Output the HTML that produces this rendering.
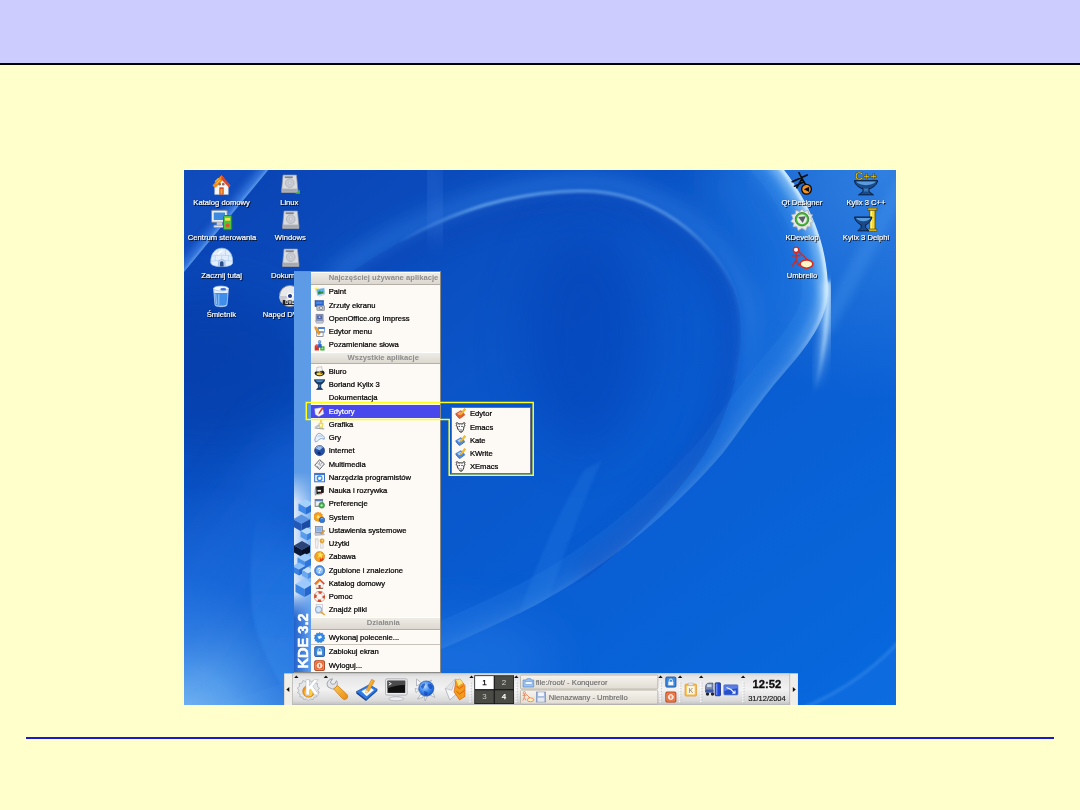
<!DOCTYPE html><html lang="pl"><head><meta charset="utf-8"><title>KDE 3.2 - menu Edytory</title><style>
*{margin:0;padding:0;box-sizing:border-box}
html,body{width:1080px;height:810px;overflow:hidden}
body{background:#ffffcc;font-family:"Liberation Sans",sans-serif;position:relative}
.hdr{position:absolute;left:0;top:0;width:1080px;height:63px;background:#ccccff}
.hline{position:absolute;left:0;top:63px;width:1080px;height:2px;background:#000}
.fline{position:absolute;left:26px;top:737px;width:1028px;height:2px;background:#1a1acc}
.desk{will-change:transform;position:absolute;left:184px;top:170px;width:712px;height:535px;overflow:hidden;background:#0a58cc;font-size:7.65px;line-height:9px;color:#000}
.desk svg{position:absolute;display:block}
.wall{left:0;top:0}
.dl{position:absolute;width:90px;text-align:center;color:#fff;white-space:nowrap;text-shadow:0.9px 0.9px 0.5px #000,0 0 1.2px #0008;-webkit-text-stroke:0.2px #fff}
.menu{position:absolute;left:110px;top:101px;width:147px;height:401.7px;background:#fdf9f5;border:0.7px solid #8a8a86;border-left:none}
.side{position:absolute;left:0;top:0;width:17.3px;height:100%;background:#5d9be6;overflow:hidden}
.mh{position:absolute;left:17.3px;right:0;height:12.8px;background:linear-gradient(#efece6,#dcd8d0);border-bottom:0.7px solid #b4b0a8;border-top:0.7px solid #fff;color:#8c8c8c;font-weight:bold;text-align:center;line-height:10.6px;padding-left:17.4px;padding-right:2.2px;white-space:nowrap}
.mi,.si{-webkit-text-stroke:0.22px #000}.mi.sel{-webkit-text-stroke:0.22px #fff}
.mi{position:absolute;left:17.3px;right:0;height:13.3px;line-height:13.3px;white-space:nowrap;padding-left:17.4px}
.mi svg{left:3px;top:1.1px;width:11.2px;height:11.2px}
.mi.sel{background:#4848ec;color:#fff}
.sep{position:absolute;left:17.3px;right:0;height:0.7px;background:#c8c4bc}
.sub{position:absolute;left:267px;top:236.5px;width:79.6px;height:67.6px;background:#fdf9f5;border:0.7px solid #6e7088}
.si{position:absolute;left:0;right:0;height:13.3px;line-height:13.3px;padding-left:17.9px;white-space:nowrap}
.si svg{left:2.8px;top:1.1px;width:11.2px;height:11.2px}
</style></head><body>
<div class="hdr"></div><div class="hline"></div><div class="fline"></div>
<div class="desk">
<svg class="wall" width="712" height="535" viewBox="0 0 712 535">
<defs>
<linearGradient id="wg" x1="0" y1="0" x2="1" y2="1"><stop offset="0" stop-color="#0a42b2"/><stop offset="0.4" stop-color="#0a55c8"/><stop offset="0.7" stop-color="#085ed4"/><stop offset="1" stop-color="#0668de"/></linearGradient>
<radialGradient id="bl" cx="-20" cy="570" r="260" gradientUnits="userSpaceOnUse"><stop offset="0" stop-color="#9cd0fa" stop-opacity=".95"/><stop offset=".3" stop-color="#6ab0f4" stop-opacity=".8"/><stop offset=".65" stop-color="#2a7ce6" stop-opacity=".4"/><stop offset="1" stop-color="#2a7ce6" stop-opacity="0"/></radialGradient>
<linearGradient id="bv" x1="0" y1="0" x2="0" y2="1"><stop offset="0" stop-color="#2a7ee8" stop-opacity="0"/><stop offset=".3" stop-color="#2a7ee8" stop-opacity=".5"/><stop offset="1" stop-color="#3a8cec" stop-opacity=".6"/></linearGradient>
<radialGradient id="tr" cx="700" cy="0" r="230" gradientUnits="userSpaceOnUse"><stop offset="0" stop-color="#4a98ee" stop-opacity=".6"/><stop offset="1" stop-color="#4a98ee" stop-opacity="0"/></radialGradient>
<filter id="b2" x="-20%" y="-20%" width="140%" height="140%"><feGaussianBlur stdDeviation="1.6"/></filter>
<filter id="b4" x="-20%" y="-20%" width="140%" height="140%"><feGaussianBlur stdDeviation="4"/></filter>
<filter id="b7" x="-20%" y="-20%" width="140%" height="140%"><feGaussianBlur stdDeviation="7"/></filter>
<filter id="b10" x="-30%" y="-30%" width="160%" height="160%"><feGaussianBlur stdDeviation="10"/></filter>
<filter id="b25" x="-50%" y="-50%" width="200%" height="200%"><feGaussianBlur stdDeviation="25"/></filter>
<linearGradient id="mg" x1="0" y1="0" x2="0" y2="1"><stop offset=".26" stop-color="#fff"/><stop offset=".52" stop-color="#000"/></linearGradient>
<mask id="mk" maskUnits="userSpaceOnUse" x="-100" y="-60" width="900" height="700"><rect x="-100" y="-60" width="900" height="700" fill="url(#mg)"/></mask>
<linearGradient id="mg2" x1="0" y1="0" x2="0" y2="1"><stop offset=".24" stop-color="#fff"/><stop offset=".36" stop-color="#3c3c3c"/><stop offset=".6" stop-color="#222"/><stop offset="1" stop-color="#141414"/></linearGradient>
<mask id="mk2" maskUnits="userSpaceOnUse" x="-100" y="-60" width="900" height="700"><rect x="-100" y="-60" width="900" height="700" fill="url(#mg2)"/></mask>
<linearGradient id="tg" gradientUnits="userSpaceOnUse" x1="0" y1="110" x2="0" y2="222"><stop offset="0" stop-color="#d4eeff" stop-opacity=".9"/><stop offset=".55" stop-color="#b4dcfc" stop-opacity=".6"/><stop offset="1" stop-color="#8cc4f8" stop-opacity="0"/></linearGradient>
<linearGradient id="lg" gradientUnits="userSpaceOnUse" x1="210" y1="0" x2="560" y2="0"><stop offset="0" stop-color="#8cc4f8" stop-opacity="0"/><stop offset=".25" stop-color="#8cc4f8"/><stop offset=".8" stop-color="#8cc4f8" stop-opacity=".8"/><stop offset="1" stop-color="#8cc4f8" stop-opacity="0"/></linearGradient>
<clipPath id="sc"><path d="M-30 -30H109L-30 138.300Z"/></clipPath>
<clipPath id="oc"><path d="M560 -40C600 -10 644 50 644 120C644 150 622 178 600 203C578 228 560 255 539 283C482 350 404 411 330 446C200 508 60 560 -100 600L-100 -40Z"/></clipPath>
<clipPath id="ic"><path d="M150 115C230 55 320 22 396 21C470 20 530 70 550 120C565 160 555 230 520 285C490 330 440 380 400 410L-60 640L-60 120Z"/></clipPath>
<clipPath id="io"><path d="M150 115C230 55 320 22 396 21C470 20 530 70 550 120C565 160 555 230 520 285C490 330 440 380 400 410L400 640L800 640L800 -60L-60 -60L-60 120Z"/></clipPath>
<clipPath id="ro"><path d="M560 -40C600 -10 644 50 644 120C644 150 622 178 600 203C578 228 560 255 539 283C482 350 404 411 330 446C200 508 60 560 -100 600L-100 700L800 700L800 -40Z"/></clipPath>
</defs>
<rect width="712" height="535" fill="url(#wg)"/>
<g clip-path="url(#ro)"><rect width="712" height="535" fill="#1470e2" opacity=".12"/><rect width="712" height="535" fill="url(#tr)"/>
<path d="M720 10L640 160" stroke="#4a98ee" stroke-width="16" opacity=".35" filter="url(#b4)"/></g>
<g clip-path="url(#oc)">
 <g filter="url(#b7)"><g clip-path="url(#io)" mask="url(#mk)">
 <path d="M560 -40C600 -10 644 50 644 120C644 150 622 178 600 203C578 228 560 255 539 283C482 350 404 411 330 446C200 508 60 560 -100 600" fill="none" stroke="#2a86ea" stroke-width="150" opacity=".5" filter="url(#b25)"/>
 <path d="M150 115C230 55 320 22 396 21C470 20 530 70 550 120C565 160 555 230 520 285C490 330 440 380 400 410" fill="none" stroke="#3a8cec" stroke-width="26" opacity=".55" filter="url(#b10)"/>
 </g></g>
 <path d="M560 -40C600 -10 644 50 644 120C644 150 622 178 600 203C578 228 560 255 539 283C482 350 404 411 330 446C200 508 60 560 -100 600" fill="none" stroke="#3a8cec" stroke-width="52" opacity=".17"/>
 <g mask="url(#mk2)">
 <path d="M560 -40C600 -10 644 50 644 120C644 150 622 178 600 203C578 228 560 255 539 283C482 350 404 411 330 446C200 508 60 560 -100 600" fill="none" stroke="#4a9cf0" stroke-width="40" opacity=".6" filter="url(#b10)"/>
 <path d="M560 -40C600 -10 644 50 644 120C644 150 622 178 600 203C578 228 560 255 539 283C482 350 404 411 330 446C200 508 60 560 -100 600" fill="none" stroke="#a8d6fc" stroke-width="20" opacity=".6" filter="url(#b4)"/>
 <path d="M560 -40C600 -10 644 50 644 120C644 150 622 178 600 203C578 228 560 255 539 283C482 350 404 411 330 446C200 508 60 560 -100 600" fill="none" stroke="#d4eeff" stroke-width="7" opacity=".9" filter="url(#b2)"/>
 </g>
 <path d="M418 290C400 330 372 400 336 520L310 520C340 420 370 350 400 300Z" fill="#3a8cec" opacity=".2" filter="url(#b2)"/>
</g>
<path d="M644 112C644.500 150 640 185 631 222" fill="none" stroke="url(#tg)" stroke-width="9" filter="url(#b4)"/><path d="M644 112C644.500 150 640 185 631 222" fill="none" stroke="url(#tg)" stroke-width="3.500" filter="url(#b2)"/>
<g clip-path="url(#ic)">
 <path d="M150 115C230 55 320 22 396 21C470 20 530 70 550 120C565 160 555 230 520 285C490 330 440 380 400 410" fill="none" stroke="#0840b0" stroke-width="40" opacity=".28" filter="url(#b10)"/>
</g>
<path d="M216 72C270 40 330 22 396 21C470 20 530 70 550 120C558 145 557 180 550 210" fill="none" stroke="url(#lg)" stroke-width="2" opacity=".95" filter="url(#b2)"/>
<g clip-path="url(#sc)"><path d="M-20 -20H120L-20 130Z" fill="#1c62d4" opacity=".28"/><path d="M-12 116.500L100 -19" stroke="#4a8cec" stroke-width="14" opacity=".75" filter="url(#b4)"/><path d="M-12 116.500L100 -19" stroke="#7ab0f4" stroke-width="2.500" opacity=".8" filter="url(#b2)"/></g>
<path d="M600 545C650 528 690 500 720 466L720 545Z" fill="#1a74e6" opacity=".35"/><path d="M600 545C650 528 690 500 720 466" fill="none" stroke="#4a98ee" stroke-width="2.500" opacity=".55" filter="url(#b2)"/>
<ellipse cx="275" cy="490" rx="95" ry="45" fill="#2a7ee8" opacity=".45" filter="url(#b25)"/>
<rect x="0" y="280" width="300" height="255" fill="url(#bl)"/>
<path d="M74 340C66 380 64 420 70 450C76 480 92 505 112 540L140 540L140 340Z" fill="url(#bv)" filter="url(#b2)"/>
<ellipse cx="400" cy="170" rx="60" ry="110" fill="#0538ae" opacity=".4" filter="url(#b25)"/>
<ellipse cx="30" cy="200" rx="110" ry="80" fill="#06329a" opacity=".4" filter="url(#b25)"/>
<path d="M-30 500C20 420 80 340 130 270" fill="none" stroke="#1a6ce0" stroke-width="60" opacity=".5" filter="url(#b25)"/>
<path d="M246 -10L256 70" stroke="#3c7ce0" stroke-width="22" opacity=".32" filter="url(#b10)"/>
</svg>
<svg style="left:26.1px;top:3.1px" width="23" height="23" viewBox="0 0 32 32"><path d="M3.500 17.500L16 3L28.500 17.500L26.500 20L16 9L5.500 20Z" fill="#e0452a"/><path d="M6.500 18L16 8.500L25.500 18V30H6.500Z" fill="#f6f6f4" stroke="#c8c8c4" stroke-width=".6"/><path d="M3.500 17.500L16 3L20 7.500L8 20.500Z" fill="#f28a1c"/><path d="M16 3L28.500 17.500L26.500 20L16 9Z" fill="#e0452a"/><path d="M7 12L12 7M9 15L14 9.500" stroke="#f8c43a" stroke-width="1.400"/><rect x="13" y="20" width="6" height="10" fill="#d63a26"/><rect x="14.500" y="22" width="3" height="7" fill="#f5b21c"/><circle cx="13.500" cy="15.500" r="1.800" fill="#8a6a5a"/><circle cx="18.500" cy="15.500" r="1.800" fill="#8a6a5a"/></svg>
<div class="dl" style="left:-7.4px;top:28.3px">Katalog domowy</div>
<svg style="left:94.6px;top:2.8px" width="21.5" height="21.5" viewBox="0 0 32 32"><path d="M6 3H26L28 24V29H4V24Z" fill="#d9dbdf" stroke="#8a8e96" stroke-width="1"/><rect x="8.500" y="5" width="12" height="2.600" fill="#7e848e"/><circle cx="16" cy="15" r="6.500" fill="#c8ccd2" stroke="#a2a6ae" stroke-width=".9"/><circle cx="16" cy="15" r="2" fill="#dfe1e5" stroke="#a2a6ae" stroke-width=".6"/><path d="M4 24H28V29H4Z" fill="#b4b8be" stroke="#8a8e96" stroke-width=".8"/><path d="M6 26.500H26" stroke="#8a8e96" stroke-width=".8"/><path d="M24 31L31 24.500V31Z" fill="#4ab840"/></svg>
<div class="dl" style="left:60.3px;top:28.3px">Linux</div>
<svg style="left:26.0px;top:38.0px" width="24" height="24" viewBox="0 0 32 32"><rect x="2" y="3" width="21" height="16" rx="1.5" fill="#e8eef6" stroke="#7d8894" stroke-width="1.4"/><rect x="5" y="6" width="15" height="10" fill="#3d8be0"/><rect x="9" y="19" width="7" height="4" fill="#c8ccd2"/><rect x="5" y="23" width="15" height="3" rx="1" fill="#dfe3e8" stroke="#8a8f98" stroke-width=".8"/><rect x="18" y="10" width="11" height="19" rx="1.5" fill="#4fc13c" stroke="#2c7a22" stroke-width="1.2"/><rect x="20" y="13" width="7" height="4" fill="#f7e24a"/><circle cx="23.5" cy="23" r="2.5" fill="#e94f2e"/></svg>
<div class="dl" style="left:-7px;top:63.1px">Centrum sterowania</div>
<svg style="left:95.6px;top:39.2px" width="21.5" height="21.5" viewBox="0 0 32 32"><path d="M6 3H26L28 24V29H4V24Z" fill="#d9dbdf" stroke="#8a8e96" stroke-width="1"/><rect x="8.500" y="5" width="12" height="2.600" fill="#7e848e"/><circle cx="16" cy="15" r="6.500" fill="#c8ccd2" stroke="#a2a6ae" stroke-width=".9"/><circle cx="16" cy="15" r="2" fill="#dfe1e5" stroke="#a2a6ae" stroke-width=".6"/><path d="M4 24H28V29H4Z" fill="#b4b8be" stroke="#8a8e96" stroke-width=".8"/><path d="M6 26.500H26" stroke="#8a8e96" stroke-width=".8"/></svg>
<div class="dl" style="left:61.3px;top:63.1px">Windows</div>
<svg style="left:25.8px;top:76.1px" width="23.5" height="23.5" viewBox="0 0 32 32"><path d="M1 22C1 9 8 3 16 3C24 3 31 9 31 22C31 26 26 28 16 28C6 28 1 26 1 22Z" fill="#e2eefc" stroke="#9cc0ec" stroke-width="1"/><path d="M3 14C8 12 24 12 29 14M1.500 21C8 19 24 19 30.500 21M11 5V13M21 5V13M7 13V20M16 12.500V19.500M25 13V20" stroke="#b4d0f2" stroke-width="1" fill="none"/><path d="M10 10C12 7 16 6 18 7C14 8 12 10 11 13Z" fill="#fff"/><path d="M11.500 28V22C11.500 17.500 20.500 17.500 20.500 22V28Z" fill="#c4d8f4" stroke="#7ea4dc" stroke-width=".8"/><path d="M13.500 28V23C13.500 20 18.500 20 18.500 23V28Z" fill="#2a4e8c"/></svg>
<div class="dl" style="left:-7.4px;top:100.7px">Zacznij tutaj</div>
<svg style="left:95.6px;top:77.1px" width="21.5" height="21.5" viewBox="0 0 32 32"><path d="M6 3H26L28 24V29H4V24Z" fill="#d9dbdf" stroke="#8a8e96" stroke-width="1"/><rect x="8.500" y="5" width="12" height="2.600" fill="#7e848e"/><circle cx="16" cy="15" r="6.500" fill="#c8ccd2" stroke="#a2a6ae" stroke-width=".9"/><circle cx="16" cy="15" r="2" fill="#dfe1e5" stroke="#a2a6ae" stroke-width=".6"/><path d="M4 24H28V29H4Z" fill="#b4b8be" stroke="#8a8e96" stroke-width=".8"/><path d="M6 26.500H26" stroke="#8a8e96" stroke-width=".8"/></svg>
<div class="dl" style="left:61.3px;top:100.7px">Dokumenty</div>
<svg style="left:25.3px;top:113.7px" width="24" height="24" viewBox="0 0 32 32"><path d="M6 6H26L24 28C24 31 8 31 8 28Z" fill="#e4f0fc" stroke="#a8c4e8" stroke-width="1"/><path d="M7.200 12H24.800L23.500 27.500C23.500 29.500 8.500 29.500 8.500 27.500Z" fill="#3f8eea"/><path d="M9 13L10 27M13 13.500V28" stroke="#8cc0f8" stroke-width="1.600"/><ellipse cx="16" cy="6" rx="10" ry="3.200" fill="#f4f9ff" stroke="#a8c4e8" stroke-width="1"/><ellipse cx="19" cy="7" rx="4" ry="1.600" fill="#3f6ed8"/></svg>
<div class="dl" style="left:-7.7px;top:139.5px">Śmietnik</div>
<svg style="left:92.6px;top:113.4px" width="26" height="26" viewBox="0 0 32 32"><circle cx="16" cy="16" r="13" fill="#e9e9ec" stroke="#8b8b92" stroke-width="1.2"/><path d="M16 16L27 8A13 13 0 0 1 29 16Z" fill="#fff"/><path d="M16 16L5 24A13 13 0 0 1 3 16Z" fill="#c9c9d0"/><circle cx="16" cy="16" r="3.2" fill="#223a8a" stroke="#fff" stroke-width="1.3"/><rect x="7" y="21" width="18" height="6" rx="1" fill="#222"/><text x="16" y="26" font-size="5.5" font-weight="bold" font-family="Liberation Sans,sans-serif" fill="#fff" text-anchor="middle">DVD</text></svg>
<div class="dl" style="left:60.6px;top:139.5px">Napęd DVD/CD</div>
<svg style="left:606.0px;top:2.0px" width="24" height="24" viewBox="0 0 32 32"><path d="M12 1L16 9L9 21M16 9L27 27M3 13L23 4M6 19L19 13" stroke="#0c0c0c" stroke-width="2.200" fill="none" stroke-linecap="round"/><circle cx="22" cy="23" r="6.500" fill="#f0921c" stroke="#0c0c0c" stroke-width="1.800"/><path d="M18.500 23L25.500 19.500V26.500Z" fill="#0c0c0c"/></svg>
<div class="dl" style="left:573px;top:28.3px">Qt Designer</div>
<svg style="left:670.0px;top:2.0px" width="24" height="24" viewBox="0 0 32 32"><text x="16" y="10.500" font-size="14" font-weight="bold" font-family="Liberation Sans,sans-serif" fill="#e8c828" stroke="#4a4208" stroke-width=".7" text-anchor="middle" textLength="30" lengthAdjust="spacingAndGlyphs">C++</text><path d="M.5 11.500H31.500C30.500 18 24 21.500 20 22.500V26L26 30.500H6L12 26V22.500C8 21.500 1.500 18 .5 11.500Z" fill="#1a4a8a" stroke="#061a3a" stroke-width="1.200"/><path d="M3 12.800H29C27.500 15.500 22 17.500 16 17.500C10 17.500 4.500 15.500 3 12.800Z" fill="#5a9cdc"/><path d="M13 22H19V26H13Z" fill="#3a78b8"/></svg>
<div class="dl" style="left:637px;top:28.3px">Kylix 3 C++</div>
<svg style="left:606.0px;top:38.0px" width="24" height="24" viewBox="0 0 32 32"><path d="M16 1L19 5L24 3L25 8L30 9L28 14L31 18L27 20L28 25L23 25L21 30L16 27L11 30L9 25L4 25L5 20L1 18L4 14L2 9L7 8L8 3L13 5Z" fill="#e4e6e8" stroke="#a7abb0" stroke-width="1"/><circle cx="16" cy="15" r="9" fill="#49b83a" stroke="#2c7a22" stroke-width="1"/><circle cx="16" cy="15" r="6.5" fill="#e9efe6"/><path d="M11 12L21 11L17 20Z" fill="#5a5e66"/></svg>
<div class="dl" style="left:573px;top:63.3px">KDevelop</div>
<svg style="left:670.0px;top:38.0px" width="24" height="24" viewBox="0 0 32 32"><rect x="21" y="1" width="7" height="29" fill="#f4d83a" stroke="#4a4208" stroke-width="1"/><path d="M23 2V29" stroke="#fff8b0" stroke-width="1.500"/><rect x="18.500" y="0" width="12" height="3" fill="#d4b01c" stroke="#4a4208" stroke-width=".8"/><rect x="18.500" y="28" width="12" height="3.500" fill="#d4b01c" stroke="#4a4208" stroke-width=".8"/><path d="M.5 12H24C23 18 18 21.500 15.500 22.500V26L20 30.500H5L9.500 26V22.500C7 21.500 1.500 18 .5 12Z" fill="#1a4a8a" stroke="#061a3a" stroke-width="1.200"/><path d="M2.500 13.300H22C21 15.500 17 17.500 12.500 17.500C8 17.500 4 15.500 2.500 13.300Z" fill="#5a9cdc"/></svg>
<div class="dl" style="left:637px;top:63.3px">Kylix 3 Delphi</div>
<svg style="left:606.0px;top:76.0px" width="24" height="24" viewBox="0 0 32 32"><circle cx="8" cy="5" r="3.6" fill="#fff" stroke="#d8281c" stroke-width="1.8"/><path d="M8 9V19M2 13H14M8 19L3 27M8 19L12 26M11 7L24 19" stroke="#d8281c" stroke-width="2" fill="none"/><ellipse cx="22" cy="24" rx="8.5" ry="5.5" fill="#fdf6c8" stroke="#d8281c" stroke-width="2"/></svg>
<div class="dl" style="left:573px;top:101.3px">Umbrello</div>
<div class="menu"><div class="side"><svg style="left:0;top:0" width="17.3" height="401" viewBox="0 0 17.3 401">
<defs><linearGradient id="sg" x1="0" y1="0" x2="1" y2="0"><stop offset="0" stop-color="#2462cc"/><stop offset="1" stop-color="#62a0ee"/></linearGradient>
<linearGradient id="sl" x1="0" y1="0" x2="1" y2="0"><stop offset="0" stop-color="#dce9fa"/><stop offset=".6" stop-color="#a4c8f4"/><stop offset="1" stop-color="#7cb0ee"/></linearGradient>
<linearGradient id="sv" x1="0" y1="0" x2="0" y2="1"><stop offset="0" stop-color="#fff" stop-opacity="0"/><stop offset=".2" stop-color="#fff"/><stop offset=".82" stop-color="#fff"/><stop offset="1" stop-color="#fff" stop-opacity="0"/></linearGradient>
<linearGradient id="sw" x1="0" y1="0" x2="0" y2="1"><stop offset="0" stop-color="#fff" stop-opacity="0"/><stop offset=".3" stop-color="#fff"/></linearGradient>
<mask id="m1" maskUnits="userSpaceOnUse" x="0" y="200" width="18" height="150"><rect y="200" width="18" height="150" fill="url(#sv)"/></mask>
<mask id="m2" maskUnits="userSpaceOnUse" x="0" y="320" width="18" height="90"><rect y="320" width="18" height="90" fill="url(#sw)"/></mask></defs>
<rect width="17.3" height="401" fill="#5d9be6"/>
<rect y="200" width="17.3" height="150" fill="url(#sl)" mask="url(#m1)"/>
<rect y="320" width="17.3" height="81" fill="url(#sg)" mask="url(#m2)"/>
<polygon points="12.0,227.5 19.5,231.6 12.0,235.8 4.5,231.6" fill="#a4d0fc"/><polygon points="4.5,231.6 12.0,235.8 12.0,242.5 4.5,238.4" fill="#3f8ae8"/><polygon points="19.5,231.6 12.0,235.8 12.0,242.5 19.5,238.4" fill="#2a6ed4"/><polygon points="7.5,242.5 16.0,247.2 7.5,251.8 -1.0,247.2" fill="#5a94e4"/><polygon points="-1.0,247.2 7.5,251.8 7.5,259.5 -1.0,254.8" fill="#2458b8"/><polygon points="16.0,247.2 7.5,251.8 7.5,259.5 16.0,254.8" fill="#1a4aa4"/><polygon points="13.0,255.5 19.5,259.1 13.0,262.6 6.5,259.1" fill="#b4d8fe"/><polygon points="6.5,259.1 13.0,262.6 13.0,268.5 6.5,264.9" fill="#5a9cec"/><polygon points="19.5,259.1 13.0,262.6 13.0,268.5 19.5,264.9" fill="#3a80dc"/><polygon points="8.0,269.0 16.0,273.4 8.0,277.8 0.0,273.4" fill="#2a4478"/><polygon points="0.0,273.4 8.0,277.8 8.0,285.0 0.0,280.6" fill="#0a1838"/><polygon points="16.0,273.4 8.0,277.8 8.0,285.0 16.0,280.6" fill="#060f28"/><polygon points="11.0,281.5 18.5,285.6 11.0,289.8 3.5,285.6" fill="#9ccafc"/><polygon points="3.5,285.6 11.0,289.8 11.0,296.5 3.5,292.4" fill="#4a90e8"/><polygon points="18.5,285.6 11.0,289.8 11.0,296.5 18.5,292.4" fill="#2f74d8"/><polygon points="5.0,290.5 11.5,294.1 5.0,297.6 -1.5,294.1" fill="#8cc0fa"/><polygon points="-1.5,294.1 5.0,297.6 5.0,303.5 -1.5,299.9" fill="#3a80e0"/><polygon points="11.5,294.1 5.0,297.6 5.0,303.5 11.5,299.9" fill="#2a68cc"/><polygon points="14.0,295.0 20.0,298.3 14.0,301.6 8.0,298.3" fill="#c4e0fe"/><polygon points="8.0,298.3 14.0,301.6 14.0,307.0 8.0,303.7" fill="#6aa8f0"/><polygon points="20.0,298.3 14.0,301.6 14.0,307.0 20.0,303.7" fill="#4a8ce0"/><polygon points="10.5,307.0 19.5,311.9 10.5,316.9 1.5,311.9" fill="#9ccafc"/><polygon points="1.5,311.9 10.5,316.9 10.5,325.0 1.5,320.1" fill="#3a84e4"/><polygon points="19.5,311.9 10.5,316.9 10.5,325.0 19.5,320.1" fill="#2466cc"/>
<text transform="translate(14.3 396.5) rotate(-90)" font-family="Liberation Sans,sans-serif" font-weight="bold" font-size="14.6" fill="#fff" stroke="#fff" stroke-width=".5">KDE 3.2</text>
</svg></div>
<div class="mh" style="top:-0px">Najczęściej używane aplikacje</div>
<div class="mi" style="top:13.25px"><svg viewBox="0 0 16 16"><path d="M3 0L4.200 3.200L7.500 2L5.200 4.800L7 7.500L4 6.200L1.500 8.500L2 5.200L0 3.500L2.800 3.200Z" fill="#f8f05a"/><path d="M3.500 5L14.500 3L15.500 11L5 13.500Z" fill="#5ab4f0" stroke="#a8c8e4" stroke-width=".8"/><path d="M5.500 9L8.500 6.500L10.500 9L13 7V10.500L6 11.800Z" fill="#2f8a3c"/><path d="M5 13.500L15.500 11L15 13L8 15.500Z" fill="#d4dae2"/></svg>Paint</div>
<div class="mi" style="top:26.55px"><svg viewBox="0 0 16 16"><rect x="1.5" y="1" width="12" height="8.5" fill="#2c62c8" stroke="#1b3f94" stroke-width=".8"/><rect x="3" y="2.5" width="9" height="3" fill="#4b8ae6"/><rect x="4" y="8" width="11" height="7" rx="1" fill="#b9bec6" stroke="#70757e" stroke-width=".8"/><circle cx="10" cy="11.5" r="2.2" fill="#e9ecf0" stroke="#5a5f68" stroke-width=".8"/></svg>Zrzuty ekranu</div>
<div class="mi" style="top:39.85px"><svg viewBox="0 0 16 16"><path d="M3 2H13V11H3Z" fill="#9aa6c8" stroke="#5d6890" stroke-width=".9"/><rect x="4.5" y="3.5" width="7" height="5.5" fill="#4a66b8"/><circle cx="8" cy="6" r="1.3" fill="#f2d23a"/><path d="M2 11H14L12.5 14.5H3.5Z" fill="#c6ccd8" stroke="#7d86a0" stroke-width=".7"/></svg>OpenOffice.org Impress</div>
<div class="mi" style="top:53.15px"><svg viewBox="0 0 16 16"><rect x="6" y="2" width="9" height="7" fill="#fff" stroke="#4a78c8" stroke-width="1"/><rect x="6" y="2" width="9" height="2.2" fill="#3c74d8"/><rect x="4" y="8" width="9" height="7" fill="#fff" stroke="#6a6e78" stroke-width="1"/><rect x="4" y="8" width="9" height="2" fill="#9aa0aa"/><path d="M1 1L4 2L9 11L6.5 12.5L1.5 4Z" fill="#f5a21c" stroke="#c4660c" stroke-width=".6"/></svg>Edytor menu</div>
<div class="mi" style="top:66.45px"><svg viewBox="0 0 16 16"><path d="M7 1L9 1L10 7L6 7Z" fill="#5a9ae8"/><circle cx="8" cy="2.5" r="1.8" fill="#8cc0f4" stroke="#2c62c8" stroke-width=".7"/><path d="M1 8H7V15H1Z" fill="#d8322a"/><circle cx="4" cy="8" r="2" fill="#e8504a"/><path d="M9 9H15V15H9Z" fill="#38a83a"/><circle cx="12" cy="12" r="1.6" fill="#8be08a"/><path d="M6 6H11V11H6Z" fill="#2c62c8"/></svg>Pozamieniane słowa</div>
<div class="mh" style="top:79.5px">Wszystkie aplikacje</div>
<div class="mi" style="top:92.85px"><svg viewBox="0 0 16 16"><ellipse cx="8" cy="10" rx="7.2" ry="4.5" fill="#1c1c1c"/><path d="M4 2L11 1L12 7L4 8Z" fill="#f4f4f4" stroke="#888" stroke-width=".6"/><ellipse cx="8" cy="11" rx="4.5" ry="2.2" fill="#f2d23a"/><circle cx="10.5" cy="10.5" r="1.3" fill="#d8322a"/><path d="M1 9C3 6 6 6 8 8" stroke="#fff" stroke-width="1" fill="none"/></svg>Biuro</div>
<div class="mi" style="top:106.1px"><svg viewBox="0 0 16 16"><path d="M.5 1H15.5C15 4.5 11.5 7 9.8 7.8V12L12.5 15H3.5L6.2 12V7.8C4.5 7 1 4.500 .5 1Z" fill="#113a6c" stroke="#061a36" stroke-width=".8"/><path d="M2 1.800H14C13 3.500 11 4.500 8 4.500C5 4.500 3 3.500 2 1.800Z" fill="#4c8cc8"/><path d="M7 8H9V12H7Z" fill="#3f7fbd"/></svg>Borland Kylix 3</div>
<div class="mi" style="top:119.35px">Dokumentacja</div>
<div class="mi sel" style="top:132.6px"><svg viewBox="0 0 16 16"><path d="M1 4L12 2L14 11L7 15L2 12Z" fill="#f6f6fa" stroke="#c9cbe0" stroke-width=".6"/><path d="M12 1L14 2.500L8 11L6 12L6.500 9.500Z" fill="#e03a2a"/><path d="M6 12L6.500 9.500L8 11Z" fill="#f6d8a0"/></svg>Edytory</div>
<div class="mi" style="top:145.85px"><svg viewBox="0 0 16 16"><path d="M1 12L15 13.500L14 15L1 13.500Z" fill="#9aa0a8"/><path d="M7 6H13L12 13H8Z" fill="#f4ec6a" stroke="#c8b428" stroke-width=".6"/><path d="M9 1L11 1L10.500 6H9.500Z" fill="#f5a21c"/><path d="M2 11L7 8L8 10L3 12.500Z" fill="#c9ccd2" stroke="#8a8f98" stroke-width=".5"/><circle cx="10" cy="9" r="1.400" fill="#fff"/></svg>Grafika</div>
<div class="mi" style="top:159.1px"><svg viewBox="0 0 16 16"><path d="M3 6C5 1 9 1 11 4C14 5 15.500 8 14.500 10.500C12 9 9 9 7 11C5 13 3.500 14.500 2 14C.5 12 1.500 8 3 6Z" fill="#eaf2fc" stroke="#6a90c8" stroke-width="1.100"/><path d="M5 7C7 5 10 5 12 7" stroke="#8cacdc" stroke-width="1" fill="none"/></svg>Gry</div>
<div class="mi" style="top:172.35px"><svg viewBox="0 0 16 16"><circle cx="8" cy="8" r="7.200" fill="#2450a8" stroke="#162f70" stroke-width=".8"/><path d="M3 5C5 2 10 2 12 4C10 6 9 8 7 7C5 6 4 7 3 5Z" fill="#9cc0ee"/><path d="M5 10C7 9 9 10 10 12C9 14 7 14 6 13Z" fill="#0e2868"/><path d="M2.500 4.500A7 7 0 0 1 13 3.500" stroke="#dce9fa" stroke-width="1" fill="none"/></svg>Internet</div>
<div class="mi" style="top:185.6px"><svg viewBox="0 0 16 16"><path d="M8 1L15 7L8 15L1 9Z" fill="#f0f0f2" stroke="#4c5058" stroke-width="1.200"/><path d="M5 6L10 10M4 10L8 13" stroke="#888c94" stroke-width="1"/><circle cx="9.500" cy="5.500" r="1.800" fill="#fff" stroke="#70747c" stroke-width=".8"/></svg>Multimedia</div>
<div class="mi" style="top:198.85px"><svg viewBox="0 0 16 16"><rect x="1" y="2" width="14" height="12" fill="#f4f8fd" stroke="#2c62c8" stroke-width="1.300"/><rect x="1" y="2" width="14" height="2.400" fill="#3c74d8"/><circle cx="8" cy="9" r="3.300" fill="none" stroke="#2f8ae8" stroke-width="2"/><circle cx="9.500" cy="8" r="1.200" fill="#fff"/></svg>Narzędzia programistów</div>
<div class="mi" style="top:212.1px"><svg viewBox="0 0 16 16"><path d="M3 2C1.500 4 1.500 12 2 15" stroke="#3c74d8" stroke-width="1.200" fill="none"/><path d="M3 2L14 1.500V11L3.500 14Z" fill="#181818"/><path d="M3.500 14L14 11V13L4 15.500Z" fill="#e8e8ec"/><rect x="5" y="7" width="5" height="2.500" fill="#f4f4f4"/><circle cx="7" cy="12.500" r="1.200" fill="#38a83a"/><circle cx="10" cy="12" r="1.200" fill="#d8322a"/></svg>Nauka i rozrywka</div>
<div class="mi" style="top:225.35px"><svg viewBox="0 0 16 16"><rect x="1.500" y="2" width="11" height="10" fill="#c6cad2" stroke="#6a6e78" stroke-width="1"/><rect x="1.500" y="2" width="11" height="2.200" fill="#5a7ab8"/><rect x="3" y="5.500" width="5" height="5" fill="#eef0f4"/><circle cx="11" cy="10.500" r="4" fill="#3fb14a" stroke="#207a2c" stroke-width=".8"/><path d="M9 10.500H13M11 8.500V12.500" stroke="#d8f4da" stroke-width="1"/></svg>Preferencje</div>
<div class="mi" style="top:238.6px"><svg viewBox="0 0 16 16"><path d="M6 0L7.500 1.500L9.500 1L10 3L12 3.500L11.500 5.500L13 7L11.500 8.500L12 10.500L10 11L9.500 13L7.500 12.500L6 14L4.500 12.500L2.500 13L2 11L0 10.500L.5 8.500L-1 7L.5 5.500L0 3.500L2 3L2.500 1L4.500 1.500Z" fill="#f5a21c" stroke="#c4660c" stroke-width=".6"/><circle cx="6" cy="7" r="2.200" fill="#fbe27a"/><circle cx="11.500" cy="11.500" r="4" fill="#2f7ae0" stroke="#1b3f94" stroke-width=".7"/><path d="M9.500 10C10.500 9 12.500 9 13.500 10" stroke="#a8d0fa" stroke-width="1" fill="none"/></svg>System</div>
<div class="mi" style="top:251.85px"><svg viewBox="0 0 16 16"><rect x="2" y="2" width="10" height="8.500" fill="#b8c8e0" stroke="#6a7890" stroke-width="1"/><rect x="3.500" y="3.500" width="7" height="5.500" fill="#8cb4e8"/><path d="M1 12L13 11L15 14L2 15Z" fill="#c6cad2" stroke="#8a8f98" stroke-width=".6"/><path d="M9 12L14 7L15.500 8.500L11 13.500Z" fill="#f0a028" stroke="#a8680c" stroke-width=".5"/></svg>Ustawienia systemowe</div>
<div class="mi" style="top:265.1px"><svg viewBox="0 0 16 16"><path d="M2 1H6V5L5.500 14.500H2.500L2 5Z" fill="#f4f4f6" stroke="#b0b4bc" stroke-width=".7"/><path d="M3 2V5" stroke="#c6cad2" stroke-width="1"/><path d="M9.500 7H13V14.500H9.500Z" fill="#f4f4f6" stroke="#b0b4bc" stroke-width=".7"/><circle cx="11.500" cy="4" r="3" fill="#f5a21c" stroke="#c4780c" stroke-width=".6"/><circle cx="12" cy="3.500" r="1.200" fill="#fbe27a"/></svg>Użytki</div>
<div class="mi" style="top:278.35px"><svg viewBox="0 0 16 16"><circle cx="8" cy="8" r="7.200" fill="#f5a21c" stroke="#c4660c" stroke-width=".7"/><path d="M4 3L7 6L5 10L9 8L12 11L11 6L14 5L10 4L9 1L7 4Z" fill="#fbe45a"/><path d="M8 15L9 10L11 12L12.500 9L14 12A7 7 0 0 1 8 15Z" fill="#e03a1c"/></svg>Zabawa</div>
<div class="mi" style="top:291.6px"><svg viewBox="0 0 16 16"><circle cx="8" cy="8" r="7.200" fill="#4a90e8" stroke="#2458b8" stroke-width=".8"/><circle cx="8" cy="8" r="5" fill="#8cc0f6"/><text x="8" y="11.800" font-size="10.500" font-weight="bold" font-family="Liberation Sans,sans-serif" fill="#fff" text-anchor="middle">?</text></svg>Zgubione i znalezione</div>
<div class="mi" style="top:304.85px"><svg viewBox="0 0 16 16"><path d="M.5 8L8 .8L15.500 8L13.500 9.500L8 4.200L2.500 9.500Z" fill="#e0402a"/><path d="M3 8.500L8 4L13 8.500V15H3Z" fill="#f6f6f6" stroke="#c0c0c0" stroke-width=".5"/><path d="M.5 8L8 .8L10 2.800L3.500 9.500Z" fill="#f07a1c"/><rect x="6.500" y="10" width="3" height="5" fill="#d8322a"/><rect x="3" y="14" width="10" height="1.500" fill="#8a5a3a"/></svg>Katalog domowy</div>
<div class="mi" style="top:318.1px"><svg viewBox="0 0 16 16"><circle cx="8" cy="8" r="6" fill="none" stroke="#f4f4f4" stroke-width="3.600"/><circle cx="8" cy="8" r="6" fill="none" stroke="#e0482a" stroke-width="3.600" stroke-dasharray="4.700 4.700" stroke-dashoffset="2.300"/><circle cx="8" cy="8" r="7.800" fill="none" stroke="#b8482a" stroke-width=".6"/><circle cx="8" cy="8" r="4.200" fill="none" stroke="#c8a8a0" stroke-width=".5"/></svg>Pomoc</div>
<div class="mi" style="top:331.35px"><svg viewBox="0 0 16 16"><rect x="3" y="1" width="9" height="12" fill="#f6f6fa" stroke="#a8acb8" stroke-width=".7"/><circle cx="6.500" cy="8" r="4.500" fill="#cfe4fa" fill-opacity=".85" stroke="#6a9ad8" stroke-width="1.200"/><path d="M10 11.500L14.500 15" stroke="#f0a028" stroke-width="2.200" stroke-linecap="round"/></svg>Znajdź pliki</div>
<div class="mh" style="top:344.9px">Działania</div>
<div class="mi" style="top:358.75px"><svg viewBox="0 0 16 16"><path d="M8 .5L9.800 2.200L12.200 1.500L12.800 4L15.200 4.800L14.500 7.200L16 9L14 10.500L14.200 13L11.800 13.200L10.500 15.300L8 14.200L5.500 15.300L4.200 13.200L1.800 13L2 10.500L0 9L1.500 7.200L.8 4.800L3.200 4L3.800 1.500L6.200 2.200Z" fill="#2f8ae8" stroke="#1b5ab8" stroke-width=".5"/><path d="M5 6.500L10 5L11.500 8L7 10.500Z" fill="#eaf4fe"/></svg>Wykonaj polecenie...</div>
<div class="sep" style="top:372.1px"></div>
<div class="mi" style="top:372.65px"><svg viewBox="0 0 16 16"><rect x="1" y="1" width="14" height="14" rx="1.500" fill="#3a8adf" stroke="#1b4f9c" stroke-width="1.200"/><rect x="4.500" y="7.500" width="7" height="5" fill="#f4f8fd"/><path d="M5.800 7.500V5.500C5.800 3.200 10.200 3.200 10.200 5.500V7.500" stroke="#f4f8fd" stroke-width="1.300" fill="none"/></svg>Zablokuj ekran</div>
<div class="mi" style="top:386.55px"><svg viewBox="0 0 16 16"><rect x="1" y="1" width="14" height="14" rx="1.500" fill="#e8602a" stroke="#a83a14" stroke-width="1.200"/><rect x="2.500" y="2.500" width="11" height="11" rx="1" fill="none" stroke="#f8b48a" stroke-width=".8"/><circle cx="8" cy="8" r="3.600" fill="#f6d8c8" stroke="#fff" stroke-width="1"/><path d="M8 6V10" stroke="#d8481c" stroke-width="1.200"/></svg>Wyloguj...</div>
</div>
<div class="sub">
<div class="si" style="top:-0.7px"><svg viewBox="0 0 16 16"><path d="M1 8L8.500 3.500L14 9L6.500 14.500Z" fill="#e8602a" stroke="#c0401c" stroke-width=".5"/><path d="M1 8L6.500 14.500V15.800L1 9.500Z" fill="#a8341a"/><path d="M6.500 14.500L14 9V10.500L6.500 15.800Z" fill="#c0401c"/><path d="M3.500 8L8 5.200L10.500 7.500L6 10.500Z" fill="#f8b08a"/><path d="M13.500 .5L15.500 2.200L9.500 9.500L7.300 10.300L7.800 8Z" fill="#f8c028" stroke="#c88a0c" stroke-width=".5"/></svg>Edytor</div>
<div class="si" style="top:13.2px"><svg viewBox="0 0 16 16"><path d="M2.500 3.500C.8 2.500 1.500 .8 3.500 1.200C4.500 1.400 5 2.200 5.200 3C7 2.400 9 2.400 10.800 3C11 2.200 11.500 1.400 12.500 1.200C14.500 .8 15.200 2.500 13.500 3.500C15 5 13.500 6.500 12.800 6.500C12.800 10 11 14.800 8.500 14.800C7.500 14.800 7.200 14 6.500 13C5 12 3.200 9 3.200 6.500C2.500 6.500 1 5 2.500 3.500Z" fill="#fdfdfd" stroke="#101010" stroke-width="1.300"/><circle cx="6" cy="6.300" r=".9" fill="#111"/><circle cx="10" cy="6.300" r=".9" fill="#111"/><path d="M6.500 10.500C7.500 11.500 8.500 11.500 9.500 10.500M8.500 14L9.200 12" stroke="#111" stroke-width=".8" fill="none"/></svg>Emacs</div>
<div class="si" style="top:26.45px"><svg viewBox="0 0 16 16"><path d="M1 8L8.500 3.500L14 9L6.500 14.500Z" fill="#4a8ce8" stroke="#2a62c4" stroke-width=".5"/><path d="M1 8L6.500 14.500V15.800L1 9.500Z" fill="#1f4ea8"/><path d="M6.500 14.500L14 9V10.500L6.500 15.800Z" fill="#2a62c4"/><path d="M3.500 8L8 5.200L10.500 7.500L6 10.500Z" fill="#b4d4fa"/><path d="M13.500 .5L15.500 2.200L9.500 9.500L7.300 10.300L7.800 8Z" fill="#f8c028" stroke="#c88a0c" stroke-width=".5"/></svg>Kate</div>
<div class="si" style="top:39.1px"><svg viewBox="0 0 16 16"><path d="M1 8L8.500 3.500L14 9L6.500 14.500Z" fill="#4a8ce8" stroke="#2a62c4" stroke-width=".5"/><path d="M1 8L6.500 14.500V15.800L1 9.500Z" fill="#1f4ea8"/><path d="M6.500 14.500L14 9V10.500L6.500 15.800Z" fill="#2a62c4"/><path d="M3.500 8L8 5.200L10.500 7.500L6 10.500Z" fill="#b4d4fa"/><path d="M13.500 .5L15.500 2.200L9.500 9.500L7.300 10.300L7.800 8Z" fill="#f8c028" stroke="#c88a0c" stroke-width=".5"/></svg>KWrite</div>
<div class="si" style="top:52.3px"><svg viewBox="0 0 16 16"><path d="M2.500 3.500C.8 2.500 1.500 .8 3.500 1.200C4.500 1.400 5 2.200 5.200 3C7 2.400 9 2.400 10.800 3C11 2.200 11.500 1.400 12.500 1.200C14.500 .8 15.200 2.500 13.500 3.500C15 5 13.500 6.500 12.800 6.500C12.800 10 11 14.800 8.500 14.800C7.500 14.800 7.200 14 6.500 13C5 12 3.200 9 3.200 6.500C2.500 6.500 1 5 2.500 3.500Z" fill="#fdfdfd" stroke="#101010" stroke-width="1.300"/><circle cx="6" cy="6.300" r=".9" fill="#111"/><circle cx="10" cy="6.300" r=".9" fill="#111"/><path d="M6.500 10.500C7.500 11.500 8.500 11.500 9.500 10.500M8.500 14L9.200 12" stroke="#111" stroke-width=".8" fill="none"/></svg>XEmacs</div>
</div>
<svg style="left:0;top:0" width="712" height="535" viewBox="184 170 712 535"><path d="M306.3 402.6H533.2V475.3H449.2V419.6H306.3Z" fill="none" stroke="#ffff1a" stroke-width="1.5"/></svg>
<svg style="left:99.5px;top:502.5px" width="514.5" height="32.5" viewBox="283.5 672.5 514.5 32.5" font-family="Liberation Sans,sans-serif">
<defs><linearGradient id="pg" x1="0" y1="0" x2="0" y2="1"><stop offset="0" stop-color="#b8b8b8"/><stop offset=".04" stop-color="#d8d8d8"/><stop offset=".12" stop-color="#e6e6e6"/><stop offset=".5" stop-color="#f2f2f2"/><stop offset=".85" stop-color="#dadada"/><stop offset=".96" stop-color="#c4c4c4"/><stop offset="1" stop-color="#9a9a9a"/></linearGradient>
<linearGradient id="tb" x1="0" y1="0" x2="0" y2="1"><stop offset="0" stop-color="#f7f4ee"/><stop offset="1" stop-color="#e0dcd2"/></linearGradient>
<radialGradient id="gl" cx=".4" cy=".35" r=".7"><stop offset="0" stop-color="#bfe0ff"/><stop offset=".5" stop-color="#3f8cf0"/><stop offset="1" stop-color="#1450c8"/></radialGradient>
<linearGradient id="og" x1="0" y1="0" x2="1" y2="1"><stop offset="0" stop-color="#fbc84a"/><stop offset="1" stop-color="#ea8a14"/></linearGradient></defs>
<rect x="283.5" y="672.5" width="514.5" height="32.5" fill="url(#pg)"/>
<rect x="283.5" y="673" width="8.6" height="32" fill="#efeee9" stroke="#a8a6a0" stroke-width=".6"/><path d="M285.8 689L288.8 686.4V691.6Z" fill="#111"/>
<rect x="789.3" y="673" width="8.4" height="32" fill="#efeee9" stroke="#a8a6a0" stroke-width=".6"/><path d="M795.3 689L792.3 686.4V691.6Z" fill="#111"/>
<path d="M293.6 677.6L295.8 675.0L298.0 677.6Z" fill="#111"/>
<path d="M323.2 677.6L325.4 675.0L327.6 677.6Z" fill="#111"/>
<g><path d="M308.5 679.5l2.2 1.6 2.6-1 1 2.6 2.8.4-.4 2.800 2.300 1.600-1.600 2.300 1.300 2.500-2.500 1.300.2 2.800-2.800.2-1 2.600-2.700-.8-2 2-2-2-2.700.8-1-2.600-2.800-.2.2-2.800-2.500-1.300 1.300-2.500-1.600-2.300 2.300-1.600-.4-2.800 2.800-.4 1-2.600 2.600 1z" fill="#e6e7ea" stroke="#a2a6ae" stroke-width=".7"/>
<circle cx="308.2" cy="690.8" r="6" fill="#f0961a"/><circle cx="308" cy="692" r="4" fill="#fbd040"/><circle cx="308.2" cy="690.8" r="6" fill="none" stroke="#c87810" stroke-width=".6"/>
<path d="M305.5 679.2h3.400v6l4.600-6h4.300l-5.400 6.600 6 8.600h-4.400l-4-6-1.100 1.300v4.700h-3.400z" fill="#fff" stroke="#b4b8c0" stroke-width=".6"/></g>
<g><path d="M327.5 686.5c-2.300-3.400.2-8 4.600-8.200l-2.200 3.200 1.400 2.300 2.900-.3 1.800-3.300c2.300 3.800-.2 8.200-4.300 8.300z" fill="#e2e4e8" stroke="#9094a0" stroke-width=".8"/>
<path d="M333.200 688.500l3.800-3.400 9 8.300c3.200 3.200-1 7.600-4.200 4.600z" fill="url(#og)" stroke="#c8740c" stroke-width=".7"/></g>
<g><path d="M355.800 691.200l13-7 8 4.600-11.300 10.200z" fill="#2e7be4" stroke="#1a4fa8" stroke-width=".7"/><path d="M355.800 691.200l9.700 7.800v1.600l-9.700-7.600z" fill="#123a8c"/><path d="M365.500 699l11.300-10.200v1.600l-11.300 10.200z" fill="#1a4fa8"/>
<path d="M360.800 690.800l8-4.400 4.700 3-7.300 6.400z" fill="#f3f8fe"/><path d="M371.200 678.800l3 1.600-6.200 10.800-2.600 1.400.2-3z" fill="url(#og)" stroke="#c8740c" stroke-width=".5"/><path d="M365.400 692.600l.2-3 2.400 1.600z" fill="#f8e4bc"/></g>
<g><rect x="385" y="678.300" width="21.700" height="16.300" rx="1.500" fill="#ececee" stroke="#9a9ea6" stroke-width=".7"/><rect x="387" y="680.200" width="17.700" height="12.200" fill="#101010"/><path d="M387 680.200h17.700v4.500c-6-.5-12 1.500-17.700 3z" fill="#4a4a4a"/><path d="M388.200 681.800l2.600 1.400-2.600 1.400" stroke="#fff" stroke-width=".9" fill="none"/>
<rect x="392.500" y="694.600" width="6.500" height="2.600" fill="#c8cbd0"/><ellipse cx="395.800" cy="698.300" rx="7.500" ry="2" fill="#ececee" stroke="#a2a6ae" stroke-width=".6"/></g>
<g><path d="M416 678.500l5 4-5 3zM414.500 688l4.500 1-3.500 3zM417 698.500l3.500-5 2.500 3zM424.500 700.500l-.5-5h3zM434.500 697l-5-2.500 2.500-3zM431 679.500l-2 4.500-3-1.500z" fill="#f4f5f7" stroke="#a2a6ae" stroke-width=".7"/>
<circle cx="425.800" cy="688" r="7.600" fill="url(#gl)" stroke="#1a4fa8" stroke-width=".6"/><path d="M420.500 686c.5-2 2.500-3.500 4-3 .5 1.500-1 3-1.500 4.500s-2 1-2.500-1.500zM427 684c1.500-1 4-.5 5 1.500.3 2-1 3.500-2.500 3-1-1.500-2.500-2.500-2.500-4.500zM423.500 691c1.500-.5 3.500.5 4 2-.5 1.500-2.500 2-3.500 1.500z" fill="#1648c0" opacity=".75"/></g>
<g><path d="M444.800 688l10-9.500 1.800 14.500-7.300 6.500z" fill="#f6f6f8" stroke="#a2a6ae" stroke-width=".7"/><path d="M444.800 688l6.500 1.800 3.500-11.300" fill="#e2e3e7" stroke="#a2a6ae" stroke-width=".5"/>
<path d="M455.500 679.500l4-1 5 6.500v11l-5.500 3.500-5.500-8z" fill="#f29a1c" stroke="#d45a14" stroke-width=".6"/><path d="M455.500 679.500l4-1 3 4-4.500 3z" fill="#fbe27a"/><path d="M456 686l3 2 4-3M456 691l3 2.500 5-3.500" stroke="#e0481c" stroke-width=".8" fill="none"/></g>
<path d="M468.8 677.6L471.0 675.0L473.2 677.6Z" fill="#111"/>
<path d="M469.5 681V702" stroke="#fdfdfd" stroke-width="1.3" stroke-dasharray="1.2 1.6"/><path d="M470.8 682V703" stroke="#c6c6c6" stroke-width="1" stroke-dasharray="1.2 1.6"/>
<rect x="473.800" y="674.800" width="39.700" height="28.700" fill="#161616"/>
<rect x="474.600" y="675.600" width="18.600" height="13" fill="#fff"/><rect x="494.300" y="675.600" width="18.600" height="13" fill="#4b4b45"/>
<rect x="474.600" y="689.800" width="18.600" height="13" fill="#4b4b45"/><rect x="494.300" y="689.800" width="18.600" height="13" fill="#4b4b45"/>
<g font-size="8" text-anchor="middle"><text x="484" y="684" fill="#000" stroke="#000" stroke-width=".25">1</text><text x="503.600" y="684" fill="#d4d4d4">2</text><text x="484" y="698.400" fill="#c4c4c4">3</text><text x="503.600" y="698.400" fill="#fff" stroke="#fff" stroke-width=".25">4</text></g>
<path d="M513.6 677.6L515.8 675.0L518.0 677.6Z" fill="#111"/>
<path d="M515.5 681V702" stroke="#fdfdfd" stroke-width="1.3" stroke-dasharray="1.2 1.6"/><path d="M516.8 682V703" stroke="#c6c6c6" stroke-width="1" stroke-dasharray="1.2 1.6"/>
<rect x="520" y="674.600" width="137.300" height="14" rx="1.200" fill="url(#tb)" stroke="#aca89e" stroke-width=".7"/>
<rect x="520" y="689.600" width="137.300" height="14" rx="1.200" fill="url(#tb)" stroke="#aca89e" stroke-width=".7"/>
<path d="M522.600 679.500h3l1-1.300h3.500l.8 1.300h2.300v7h-10.600z" fill="#9cc4f0" stroke="#5a8ad0" stroke-width=".7"/><rect x="524.600" y="681.300" width="7" height="2.600" fill="#eef5fd" stroke="#5a8ad0" stroke-width=".4"/>
<text x="535.200" y="684.200" font-size="7.650" fill="#6e6e6e" stroke="#6e6e6e" stroke-width=".15">file:/root/ - Konqueror</text>
<g stroke="#ee7a48" stroke-width=".8" fill="none"><circle cx="523.800" cy="692.300" r="1.200"/><path d="M523.800 693.500v3.500M522 694.800h3.600M523.800 697l-1.500 3M523.800 697l1.400 2.600M525 693l4.500 4.500"/><ellipse cx="530" cy="699.300" rx="3.200" ry="1.900" fill="#fdf6c8"/></g>
<rect x="535.800" y="691.500" width="9.400" height="10" fill="#a4b8dc" stroke="#7088b8" stroke-width=".6"/><rect x="537.600" y="691.800" width="5.800" height="3.800" fill="#f4f6fa"/><rect x="537.200" y="697.200" width="6.600" height="4" fill="#e4e8f0"/>
<text x="548.200" y="699.100" font-size="7.650" fill="#6e6e6e" stroke="#6e6e6e" stroke-width=".15">Nienazwany - Umbrello</text>
<path d="M657.8 677.6L660.0 675.0L662.2 677.6Z" fill="#111"/>
<path d="M659.7 681V702" stroke="#fdfdfd" stroke-width="1.3" stroke-dasharray="1.2 1.6"/><path d="M661.0 682V703" stroke="#c6c6c6" stroke-width="1" stroke-dasharray="1.2 1.6"/>
<g transform="translate(664.6 675.800) scale(.72)"><rect x="1" y="1" width="14" height="14" rx="1.500" fill="#3a8adf" stroke="#1b4f9c" stroke-width="1.200"/><rect x="4.500" y="7.500" width="7" height="5" fill="#f4f8fd"/><path d="M5.800 7.500V5.500C5.800 3.200 10.200 3.200 10.200 5.500V7.500" stroke="#f4f8fd" stroke-width="1.300" fill="none"/></g><g transform="translate(664.600 690.800) scale(.72)"><rect x="1" y="1" width="14" height="14" rx="1.500" fill="#e8602a" stroke="#a83a14" stroke-width="1.200"/><rect x="2.500" y="2.500" width="11" height="11" rx="1" fill="none" stroke="#f8b48a" stroke-width=".8"/><circle cx="8" cy="8" r="3.600" fill="#f6d8c8" stroke="#fff" stroke-width="1"/><path d="M8 6V10" stroke="#d8481c" stroke-width="1.200"/></g>
<path d="M677.4 677.6L679.6 675.0L681.8 677.6Z" fill="#111"/>
<path d="M679.1 681V702" stroke="#fdfdfd" stroke-width="1.3" stroke-dasharray="1.2 1.6"/><path d="M680.4 682V703" stroke="#c6c6c6" stroke-width="1" stroke-dasharray="1.2 1.6"/>
<rect x="684.500" y="683.600" width="11.500" height="12" rx="1" fill="#f8bc48" stroke="#e0962a" stroke-width=".7"/><rect x="686.300" y="685.600" width="7.900" height="8.300" fill="#fcf8e8"/><rect x="687.800" y="682.500" width="5" height="2.400" rx=".6" fill="#e8e8ec" stroke="#a8a8b0" stroke-width=".5"/><text x="690.300" y="692.600" font-size="6.500" font-weight="bold" fill="#a89c80" text-anchor="middle">K</text>
<path d="M698.5 677.6L700.7 675.0L702.9 677.6Z" fill="#111"/>
<path d="M700.3 681V702" stroke="#fdfdfd" stroke-width="1.3" stroke-dasharray="1.2 1.6"/><path d="M701.6 682V703" stroke="#c6c6c6" stroke-width="1" stroke-dasharray="1.2 1.6"/>
<path d="M705 686.500c0-2.500 1.500-4 4-4h3.500v9h-7.500z" fill="#7a88a8" stroke="#3a4868" stroke-width=".6"/><rect x="706.500" y="683.800" width="4.500" height="2.800" fill="#c8d4ec"/><circle cx="707" cy="693.500" r="1.700" fill="#222"/><circle cx="712" cy="693.500" r="1.700" fill="#222"/><rect x="705" y="689" width="8" height="3" fill="#3a58b0"/>
<rect x="714.600" y="682.300" width="5.400" height="13" rx=".8" fill="#1f48e0" stroke="#10247c" stroke-width=".7"/><rect x="715.400" y="683" width="1.500" height="11.600" fill="#6a8cf4"/>
<rect x="723.300" y="684.300" width="14.200" height="10.200" rx="1" fill="#2450d0" stroke="#7088c8" stroke-width=".7"/><path d="M723.800 684.800h13.200v3c-4 .5-9 1-13.200 3z" fill="#5a7ee8"/><path d="M726 687l4.500 2 3.500 3.500M734.500 690v2.800h-2.800" stroke="#f4f8fe" stroke-width="1.100" fill="none"/>
<path d="M740.4 677.6L742.6 675.0L744.8 677.6Z" fill="#111"/>
<path d="M742.3 681V702" stroke="#fdfdfd" stroke-width="1.3" stroke-dasharray="1.2 1.6"/><path d="M743.6 682V703" stroke="#c6c6c6" stroke-width="1" stroke-dasharray="1.2 1.6"/>
<text x="766.400" y="687.200" font-size="11.200" font-weight="bold" text-anchor="middle" fill="#0c0c0c" stroke="#0c0c0c" stroke-width=".3">12:52</text>
<text x="766.400" y="700.700" font-size="7.500" text-anchor="middle" fill="#111" stroke="#111" stroke-width=".15">31/12/2004</text>
</svg>
</div></body></html>
